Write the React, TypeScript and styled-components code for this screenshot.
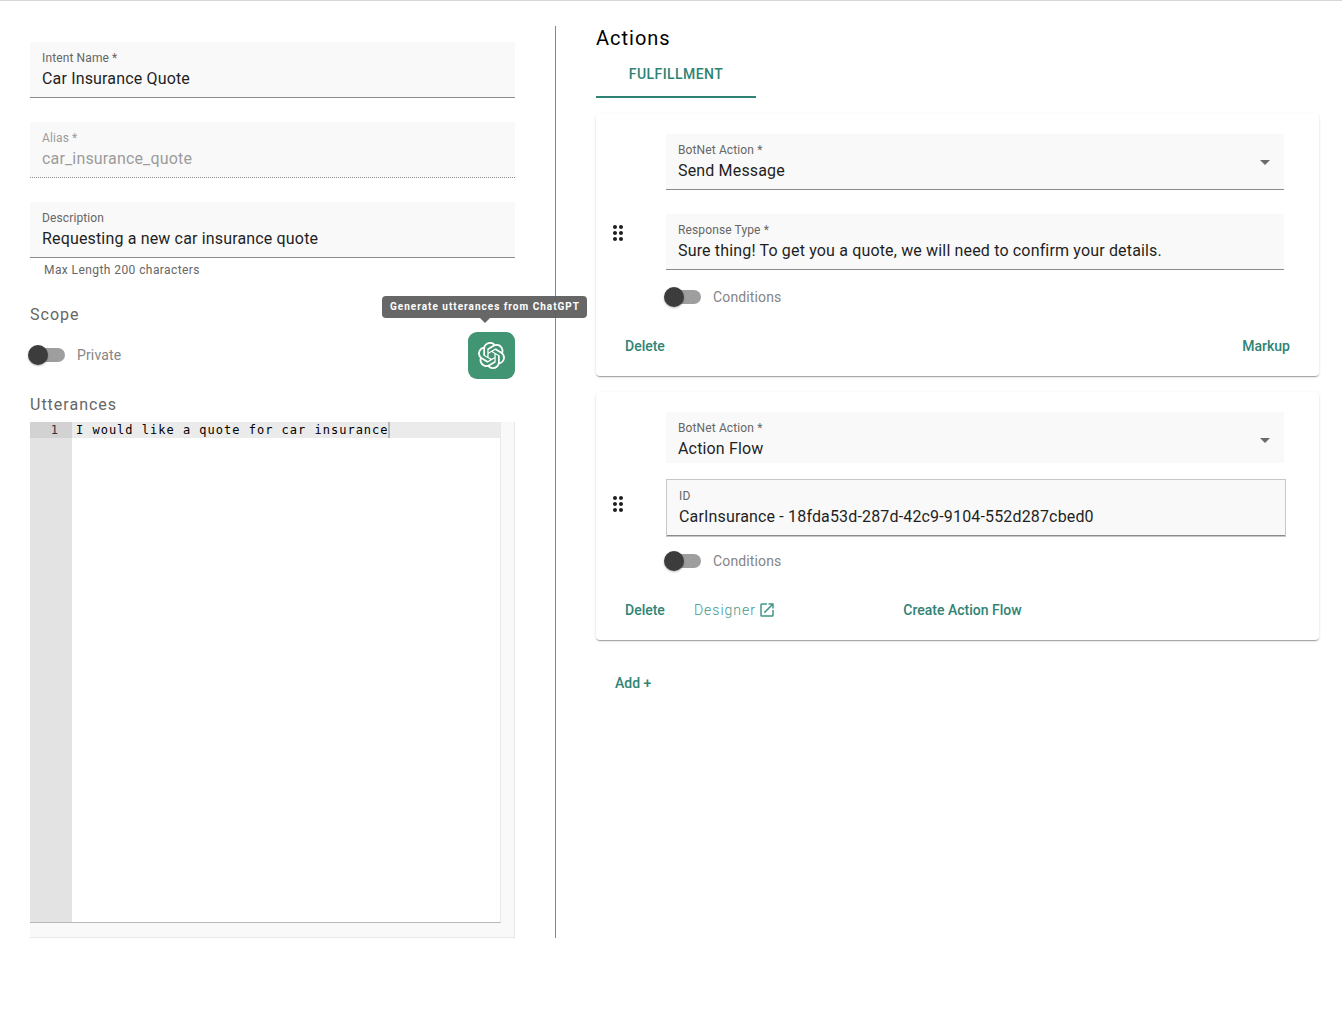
import React, { useState } from "react";
import styled, { createGlobalStyle } from "styled-components";
import { MdDragIndicator, MdOpenInNew } from "react-icons/md";
import { SiOpenai } from "react-icons/si";

const color = {
  accent: "#2f8374",
  link: "#3f9788",
  text: "#1f1f1f",
  muted: "#666666",
  disabled: "#9c9c9c",
  line: "#8c8c8c",
  fill: "#f9f9f9",
};

const GlobalStyle = createGlobalStyle`
  *, *::before, *::after { box-sizing: border-box; }
  body {
    margin: 0;
    background: #fff;
    font-family: Roboto, "Liberation Sans", sans-serif;
    -webkit-font-smoothing: antialiased;
  }
  button, input, select, textarea { font: inherit; letter-spacing: inherit; }
`;

const Page = styled.main`
  display: grid;
  grid-template-columns: minmax(0, 556fr) minmax(0, 786fr);
  align-items: start;
  border-top: 1px solid #d6d6d6;
  padding-top: 25px;
`;

const IntentPane = styled.section`
  display: flex;
  flex-direction: column;
  padding: 16px 40px 0 30px;
  border-right: 1px solid #868686;
`;

const FieldStack = styled.div<{ $gap: number }>`
  display: flex;
  flex-direction: column;
  gap: ${(p) => p.$gap}px;
`;

const FieldBox = styled.label<{ $disabled?: boolean; $bare?: boolean }>`
  display: grid;
  grid-template-columns: minmax(0, 1fr) auto;
  align-items: center;
  row-gap: 1px;
  padding: 8px 12px ${(p) => (p.$bare ? 2 : 6)}px;
  background: ${color.fill};
  color: ${(p) => (p.$disabled ? color.disabled : color.text)};
  border-bottom: ${(p) => (p.$bare ? 0 : 1)}px ${(p) => (p.$disabled ? "dotted" : "solid")} ${color.line};
`;

const FieldFrame = styled.div`
  margin-right: -2px;
  border: 1px solid #c8c8c8;
`;

const FieldLabel = styled.span<{ $disabled?: boolean }>`
  grid-column: 1;
  font-size: 12px;
  line-height: 16px;
  letter-spacing: 0.01em;
  color: ${(p) => (p.$disabled ? color.disabled : color.muted)};
`;

const FieldInput = styled.input`
  grid-column: 1;
  width: 100%;
  height: 24px;
  padding: 0;
  border: 0;
  outline: 0;
  background: transparent;
  color: inherit;
  font-size: 16px;
  line-height: 24px;
  letter-spacing: 0.01em;
`;

const FieldSelect = styled(FieldInput).attrs({ as: "select" })`
  appearance: none;
`;

const SelectArrow = styled.svg`
  grid-column: 2;
  grid-row: 1 / span 2;
  margin-right: 2px;
  width: 10px;
  height: 5px;
  fill: #6b6b6b;
`;

const Hint = styled.p`
  margin: 2px 0 0 14px;
  font-size: 12px;
  line-height: 20px;
  letter-spacing: 0.035em;
  color: ${color.muted};
`;

const SectionTitle = styled.h2<{ $top: number }>`
  margin: ${(p) => p.$top}px 0 5px;
  font-size: 16px;
  font-weight: 400;
  line-height: 24px;
  letter-spacing: 1px;
  color: ${color.muted};
`;

const ScopeRow = styled.div`
  display: flex;
  align-items: center;
  justify-content: space-between;
`;

const ToggleLabel = styled.label`
  display: flex;
  align-items: flex-start;
  gap: 12px;
  height: 21px;
  margin-left: -2px;
  font-size: 14px;
  line-height: 20px;
  letter-spacing: 0.01em;
  color: #858585;
`;

const ToggleTrack = styled.span`
  position: relative;
  display: flex;
  &::before {
    content: "";
    position: absolute;
    inset: 3px 0 3px 1px;
    border-radius: 7px;
    background: #9e9e9e;
  }
`;

const ToggleInput = styled.input`
  appearance: none;
  position: relative;
  display: flex;
  width: 37px;
  height: 20px;
  margin: 0;
  &::before {
    content: "";
    width: 20px;
    height: 20px;
    border-radius: 50%;
    background: #3c3c3c;
    box-shadow: 0 1px 2px rgba(0, 0, 0, 0.3);
  }
  &:checked::before { margin-left: 17px; }
`;

const GenerateWrap = styled.div`
  position: relative;
  display: flex;
`;

const GenerateButton = styled.button`
  display: grid;
  place-items: center;
  width: 47px;
  height: 47px;
  padding: 0;
  border: 0;
  border-radius: 9px;
  background: #419573;
  color: #fff;
`;

const Tooltip = styled.span`
  position: absolute;
  right: -72px;
  bottom: calc(100% + 14px);
  z-index: 1;
  padding: 0 7px 0 8px;
  border-radius: 4px;
  background: rgba(97, 97, 97, 0.96);
  color: #fff;
  font-size: 10px;
  font-weight: 700;
  line-height: 22px;
  letter-spacing: 1px;
  white-space: nowrap;
  &::after {
    content: "";
    position: absolute;
    top: 100%;
    left: calc(50% - 4px);
    border: 5px solid transparent;
    border-top-color: #666;
    border-bottom: 0;
  }
`;

const EditorShell = styled.div`
  padding: 0 13px 14px 0;
  background: ${color.fill};
  border: solid #e8e8e8;
  border-width: 0 1px 1px 0;
`;

const Editor = styled.div`
  display: flex;
  height: 501px;
  background: #fff;
  border-right: 1px solid #e8e8e8;
  border-bottom: 1px solid #b8b8b8;
  font-family: "DejaVu Sans Mono", "Liberation Mono", monospace;
  font-size: 12px;
  line-height: 16px;
  letter-spacing: 1px;
`;

const Gutter = styled.div`
  flex: none;
  width: 42px;
  background: #e3e3e3;
`;

const LineNumber = styled.div<{ $active: boolean }>`
  padding-right: 13px;
  text-align: right;
  color: #333;
  background: ${(p) => (p.$active ? "#d2d2d2" : "transparent")};
`;

const CodeArea = styled.div`
  position: relative;
  flex: 1;
  display: flex;
`;

const CodeInput = styled.textarea`
  flex: 1;
  min-width: 0;
  padding: 0 4px;
  border: 0;
  outline: 0;
  resize: none;
  overflow: hidden;
  line-height: 16px;
  color: #000;
  background: linear-gradient(#ebebeb, #ebebeb) no-repeat 0 0 / 100% 16px;
`;

const Caret = styled.span`
  position: absolute;
  top: 0;
  width: 2px;
  height: 16px;
  background: #b9b9b9;
`;

const ActionsPane = styled.section`
  padding: 0 23px 24px 40px;
`;

const PaneTitle = styled.h1`
  margin: 0;
  font-size: 20px;
  font-weight: 400;
  line-height: 24px;
  letter-spacing: 1px;
  color: #000;
`;

const Tab = styled.button`
  display: block;
  width: 160px;
  height: 48px;
  padding: 0;
  border: 0;
  box-shadow: inset 0 -2px ${color.accent};
  background: transparent;
  color: ${color.accent};
  font-size: 14px;
  font-weight: 500;
  letter-spacing: 0.03em;
`;

const CardList = styled.div`
  display: flex;
  flex-direction: column;
  gap: 16px;
  margin-top: 16px;
`;

const Card = styled.article`
  padding-top: 20px;
  border-radius: 4px;
  background: #fff;
  box-shadow: 0 2px 1px -1px rgba(0, 0, 0, 0.2), 0 1px 1px 0 rgba(0, 0, 0, 0.14),
    0 1px 3px 0 rgba(0, 0, 0, 0.12);
`;

const CardBody = styled.div`
  display: grid;
  grid-template-columns: 58px minmax(0, 1fr);
  padding: 0 35px 0 12px;
`;

const DragHandle = styled.button`
  display: flex;
  align-self: center;
  justify-self: start;
  width: 20px;
  padding: 0;
  border: 0;
  background: transparent;
  color: ${color.text};
  & > svg { flex: none; margin-left: -2px; }
`;

const Conditions = styled.div<{ $top: number }>`
  display: flex;
  padding: ${(p) => p.$top}px 0 24px;
`;

const CardFooter = styled.footer`
  display: flex;
  justify-content: space-between;
  padding: 0 29px 16px;
  line-height: 28px;
`;

const FooterStart = styled.div<{ $split: boolean }>`
  display: flex;
  gap: 29px;
  flex: 0 0 ${(p) => (p.$split ? "42%" : "auto")};
`;

const FooterEnd = styled.div<{ $split: boolean }>`
  display: flex;
  flex: ${(p) => (p.$split ? "1" : "none")};
  margin-left: ${(p) => (p.$split ? "-1px" : "0")};
`;

const TextButton = styled.button`
  padding: 0;
  border: 0;
  background: transparent;
  color: ${color.accent};
  font-size: 14px;
  font-weight: 500;
  line-height: 28px;
`;

const DesignerLink = styled.a`
  display: flex;
  align-items: center;
  gap: 2px;
  color: ${color.link};
  font-size: 14px;
  font-weight: 300;
  letter-spacing: 1px;
  text-decoration: none;
`;

const AddRow = styled.div`
  padding: 29px 19px;
`;

type FieldProps = {
  label: string;
  value: string;
  disabled?: boolean;
};

function TextField({ label, value, disabled }: FieldProps) {
  return (
    <FieldBox $disabled={disabled}>
      <FieldLabel $disabled={disabled}>{label}</FieldLabel>
      <FieldInput defaultValue={value} disabled={disabled} />
    </FieldBox>
  );
}

function SelectField({ label, value, bare }: { label: string; value: string; bare?: boolean }) {
  return (
    <FieldBox $bare={bare}>
      <FieldLabel>{label}</FieldLabel>
      <FieldSelect defaultValue={value}>
        <option>{value}</option>
      </FieldSelect>
      <SelectArrow viewBox="0 0 10 5" aria-hidden="true">
        <path d="M0 0h10L5 5z" />
      </SelectArrow>
    </FieldBox>
  );
}

function Toggle({ children }: { children: string }) {
  return (
    <ToggleLabel>
      <ToggleTrack>
        <ToggleInput type="checkbox" role="switch" />
      </ToggleTrack>
      {children}
    </ToggleLabel>
  );
}

type ActionCardProps = {
  children: React.ReactNode;
  gap: number;
  conditionsTop: number;
  designer?: boolean;
  endAction: string;
};

function ActionCard({ children, gap, conditionsTop, designer = false, endAction }: ActionCardProps) {
  return (
    <Card>
      <CardBody>
        <DragHandle aria-label="Reorder action">
          <MdDragIndicator size={24} />
        </DragHandle>
        <div>
          <FieldStack $gap={gap}>{children}</FieldStack>
          <Conditions $top={conditionsTop}>
            <Toggle>Conditions</Toggle>
          </Conditions>
        </div>
      </CardBody>
      <CardFooter>
        <FooterStart $split={designer}>
          <TextButton>Delete</TextButton>
          {designer && (
            <DesignerLink href="#designer">
              Designer
              <MdOpenInNew size={18} />
            </DesignerLink>
          )}
        </FooterStart>
        <FooterEnd $split={designer}>
          <TextButton>{endAction}</TextButton>
        </FooterEnd>
      </CardFooter>
    </Card>
  );
}

export default function App() {
  const [code, setCode] = useState("I would like a quote for car insurance");

  return (
    <>
      <GlobalStyle />
      <Page>
        <IntentPane>
          <FieldStack $gap={24}>
            <TextField label="Intent Name *" value="Car Insurance Quote" />
            <TextField label="Alias *" value="car_insurance_quote" disabled />
            <TextField label="Description" value="Requesting a new car insurance quote" />
          </FieldStack>
          <Hint>Max Length 200 characters</Hint>

          <SectionTitle $top={23}>Scope</SectionTitle>
          <ScopeRow>
            <Toggle>Private</Toggle>
            <GenerateWrap>
              <GenerateButton aria-labelledby="generate-tip">
                <SiOpenai size={27} />
              </GenerateButton>
              <Tooltip id="generate-tip" role="tooltip">
                Generate utterances from ChatGPT
              </Tooltip>
            </GenerateWrap>
          </ScopeRow>

          <SectionTitle $top={14}>Utterances</SectionTitle>
          <EditorShell>
            <Editor>
              <Gutter>
                <LineNumber $active>1</LineNumber>
              </Gutter>
              <CodeArea>
                <CodeInput
                  aria-label="Utterances"
                  spellCheck={false}
                  value={code}
                  onChange={(e) => setCode(e.target.value)}
                />
                <Caret style={{ left: `calc(${code.length} * (1ch + 1px) + 3px)` }} />
              </CodeArea>
            </Editor>
          </EditorShell>
        </IntentPane>

        <ActionsPane>
          <PaneTitle>Actions</PaneTitle>
          <Tab>FULFILLMENT</Tab>
          <CardList>
            <ActionCard gap={24} conditionsTop={17} endAction="Markup">
              <SelectField label="BotNet Action *" value="Send Message" />
              <TextField
                label="Response Type *"
                value="Sure thing! To get you a quote, we will need to confirm your details."
              />
            </ActionCard>
            <ActionCard gap={16} conditionsTop={14} designer endAction="Create Action Flow">
              <SelectField label="BotNet Action *" value="Action Flow" bare />
              <FieldFrame>
                <TextField label="ID" value="CarInsurance - 18fda53d-287d-42c9-9104-552d287cbed0" />
              </FieldFrame>
            </ActionCard>
          </CardList>
          <AddRow>
            <TextButton>Add +</TextButton>
          </AddRow>
        </ActionsPane>
      </Page>
    </>
  );
}
